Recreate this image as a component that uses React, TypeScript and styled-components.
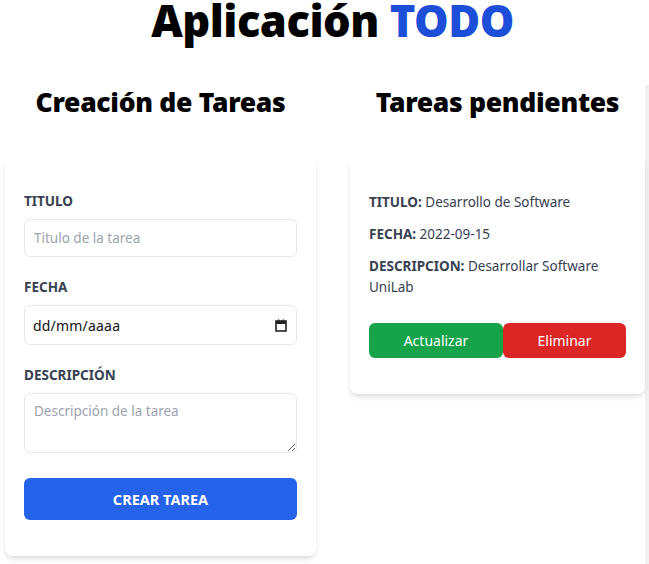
import React from "react";
import styled, { createGlobalStyle } from "styled-components";

const Global = createGlobalStyle`
  html, body { margin: 0; padding: 0; background: #fff; }
  body { font-family: "Noto Sans", "Open Sans", sans-serif; overflow: hidden; }
  * { box-sizing: border-box; }
`;

const Page = styled.div`
  width: 649px;
  height: 564px;
  overflow: hidden;
`;

const Title = styled.h1`
  margin: 0;
  text-align: center;
  font-size: 43.5px;
  line-height: 41px;
  font-weight: 900;
  color: #000;
  letter-spacing: -0.5px;
  padding-left: 16px;
`;

const Accent = styled.span`
  color: #1d4ed8;
`;

const Columns = styled.div`
  display: grid;
  grid-template-columns: 321px 1fr;
  column-gap: 24px;
  margin-top: 44px;
`;

const Column = styled.section<{ $scroll?: boolean }>`
  display: flex;
  flex-direction: column;
  padding: 0 ${(p) => (p.$scroll ? "0" : "5px")} 0 5px;
  ${(p) => (p.$scroll ? "border-right: 6px solid #f0f0f0; min-height: 480px;" : "")}
`;

const SectionTitle = styled.h2`
  margin: 0 0 37px;
  text-align: center;
  font-size: 26.5px;
  line-height: 34px;
  font-weight: 900;
  color: #000;
  letter-spacing: -0.3px;
`;

const Card = styled.div<{ $pt: number; $pb: number }>`
  background: #fff;
  border-radius: 8px;
  box-shadow: 0 4px 6px -1px rgba(0, 0, 0, 0.1), 0 2px 4px -2px rgba(0, 0, 0, 0.1);
  padding: ${(p) => p.$pt}px 19px ${(p) => p.$pb}px;
`;

const Form = styled.form`
  display: flex;
  flex-direction: column;
`;

const Label = styled.label`
  display: block;
  font-size: 13.5px;
  line-height: 20px;
  font-weight: 700;
  color: #374151;
  margin-bottom: 8px;
`;

const Field = styled.div`
  margin-bottom: 20px;
`;

const inputBase = `
  width: 100%;
  border: 1px solid #e5e7eb;
  border-radius: 6px;
  font-family: "Noto Sans", sans-serif;
  font-size: 13.5px;
  color: #374151;
  background: #fff;
  outline: none;
`;

const TextInput = styled.input`
  ${inputBase}
  height: 38px;
  padding: 0 9px;
  &::placeholder { color: #9ca3af; }
`;

const DateBox = styled.div`
  ${inputBase}
  height: 40px;
  padding: 0 9px 0 8px;
  display: flex;
  align-items: center;
  justify-content: space-between;
  color: #111;
  font-size: 14px;
  letter-spacing: 0.2px;
`;

const TextArea = styled.textarea`
  ${inputBase}
  height: 60px;
  padding: 8px 9px;
  resize: vertical;
  display: block;
  &::placeholder { color: #9ca3af; }
`;

const Submit = styled.button`
  margin-top: 5px;
  height: 42px;
  width: 100%;
  border: none;
  border-radius: 6px;
  background: #2563eb;
  color: #fff;
  font-family: "Noto Sans", sans-serif;
  font-size: 14.5px;
  font-weight: 700;
`;

const Info = styled.p`
  margin: 0 0 11px;
  font-size: 13.5px;
  line-height: 21px;
  color: #374151;
`;

const Key = styled.strong`
  font-weight: 700;
`;

const Actions = styled.div`
  display: flex;
  margin-top: 25px;
`;

const Action = styled.button<{ $bg: string; $w: number }>`
  width: ${(p) => p.$w}px;
  height: 35px;
  border: none;
  border-radius: 6px;
  background: ${(p) => p.$bg};
  color: #fff;
  font-family: "Noto Sans", sans-serif;
  font-size: 14px;
`;

const CalendarIcon = () => (
  <svg width="12" height="13" viewBox="0 0 12 13" fill="none">
    <rect x="1" y="2" width="10" height="10" stroke="#222" strokeWidth="1.6" />
    <rect x="1" y="2" width="10" height="3" fill="#222" />
    <rect x="3" y="0.5" width="1.4" height="2" fill="#222" />
    <rect x="7.6" y="0.5" width="1.4" height="2" fill="#222" />
  </svg>
);

export default function App() {
  return (
    <Page>
      <Global />
      <Title>
        Aplicación <Accent>TODO</Accent>
      </Title>
      <Columns>
        <Column>
          <SectionTitle>Creación de Tareas</SectionTitle>
          <Card $pt={35} $pb={36}>
            <Form onSubmit={(e) => e.preventDefault()}>
              <Field>
                <Label>TITULO</Label>
                <TextInput placeholder="Titulo de la tarea" />
              </Field>
              <Field>
                <Label>FECHA</Label>
                <DateBox>
                  <span>dd/mm/aaaa</span>
                  <CalendarIcon />
                </DateBox>
              </Field>
              <Field>
                <Label>DESCRIPCIÓN</Label>
                <TextArea placeholder="Descripción de la tarea" />
              </Field>
              <Submit type="submit">CREAR TAREA</Submit>
            </Form>
          </Card>
        </Column>
        <Column $scroll>
          <SectionTitle>Tareas pendientes</SectionTitle>
          <Card $pt={36} $pb={36}>
            <Info>
              <Key>TITULO:</Key> Desarrollo de Software
            </Info>
            <Info>
              <Key>FECHA:</Key> 2022-09-15
            </Info>
            <Info>
              <Key>DESCRIPCION:</Key> Desarrollar Software UniLab
            </Info>
            <Actions>
              <Action $bg="#16a34a" $w={134}>Actualizar</Action>
              <Action $bg="#dc2626" $w={123}>Eliminar</Action>
            </Actions>
          </Card>
        </Column>
      </Columns>
    </Page>
  );
}
